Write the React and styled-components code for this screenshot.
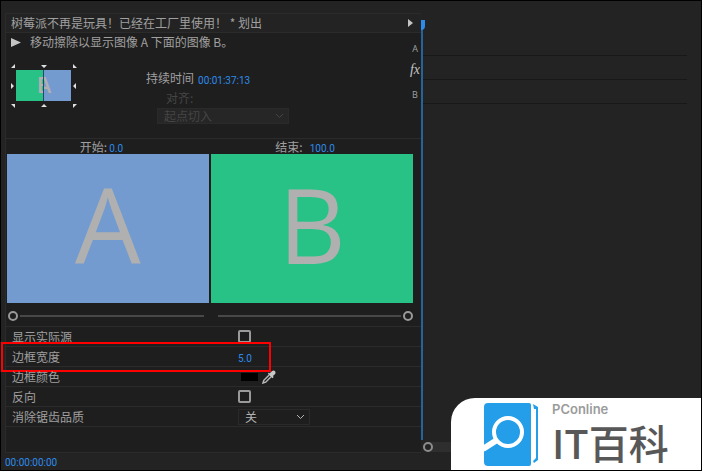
import React, { useState } from "react";
import styled, { createGlobalStyle, css } from "styled-components";

const colors = {
  app: "#232323",
  panel: "#1e1e1e",
  line: "#2b2b2b",
  text: "#a0a0a0",
  dim: "#454545",
  hot: "#2d8ceb",
  clipA: "#739bcf",
  clipB: "#29c286",
  letter: "#b0b0b0",
};

const GlobalStyle = createGlobalStyle`
  *, *::before {
    box-sizing: border-box;
  }
  body {
    margin: 0;
    background: #000;
    color: ${colors.text};
    font: 12px/18px "Noto Sans CJK SC", sans-serif;
  }
  button, input, select {
    margin: 0;
    padding: 0;
    border: 0;
    background: none;
    color: inherit;
    font: inherit;
  }
`;

const flexCenter = css`
  display: flex;
  align-items: center;
`;

const Root = styled.div`
  position: relative;
  display: flex;
  flex-direction: column;
  min-height: 100vh;
  border: 1px solid #000;
  background: ${colors.app};
  overflow: hidden;
`;

const Workspace = styled.main`
  flex: 1;
  display: grid;
  grid-template-columns: 60% 1fr;
`;

const Panel = styled.section`
  display: flex;
  flex-direction: column;
  margin: 12px 0 0 4px;
  border: 1px solid ${colors.line};
  border-right: 0;
  background: ${colors.panel};
`;

const PanelHeader = styled.header`
  ${flexCenter}
  justify-content: space-between;
  height: 19px;
  padding: 0 8px 0 5px;
  border-bottom: 1px solid ${colors.line};
  background: ${colors.app};
`;

const Title = styled.h1`
  margin: 0;
  font-size: 12px;
  font-weight: 400;
  white-space: pre;
`;

const IconButton = styled.button`
  ${flexCenter}
  color: #c4c4c4;

  svg {
    display: block;
  }
`;

const Info = styled.div`
  display: flex;
  justify-content: space-between;
  padding-bottom: 14px;
  border-bottom: 1px solid ${colors.line};
`;

const Description = styled.div`
  ${flexCenter}
  gap: 9px;
  padding-left: 5px;
  white-space: nowrap;
`;

const Settings = styled.div`
  display: flex;
  gap: 69px;
  padding: 13px 0 0 5px;
`;

const Timing = styled.div`
  display: flex;
  flex-direction: column;
  padding-top: 4px;
`;

const Field = styled.div`
  ${flexCenter}
  gap: 4px;
  height: 20px;
  padding-left: ${({ $indent }) => $indent || 0}px;
  color: ${({ $dim }) => ($dim ? colors.dim : colors.text)};
`;

const HotInput = styled.input`
  width: ${({ $width }) => $width}px;
  height: 16px;
  padding-top: 4px;
  color: ${colors.hot};
  font: 10px/12px Roboto, sans-serif;
`;

const SelectBox = styled.div`
  ${flexCenter}
  position: relative;
  width: ${({ $width }) => $width}px;
  height: 16px;
  margin-left: ${({ $indent }) => $indent || 0}px;
  border: 1px solid #2a2a2a;
  background: ${({ $dim }) => ($dim ? "#262626" : "transparent")};
  color: ${({ $dim }) => ($dim ? colors.dim : "#b4b4b4")};

  select {
    width: 100%;
    height: 14px;
    padding-left: 6px;
    appearance: none;
    line-height: 14px;
    opacity: 1;
  }
  svg {
    position: absolute;
    right: 4px;
    pointer-events: none;
  }
`;

const TrackLabels = styled.div`
  display: flex;
  flex-direction: column;
  width: 12px;
  padding-top: 4px;
  text-align: center;
  font: 9px/23px "Open Sans", sans-serif;

  i {
    font: italic 14px/20px "Liberation Serif", serif;
    height: 23px;
    color: #c4c4c4;
  }
`;

const Previews = styled.div`
  display: grid;
  grid-template-columns: 1fr 1fr;
  gap: 0 ${({ $gap }) => $gap}px;
  padding: 0 8px 0 ${({ $left }) => $left}px;
`;

const PreviewLabel = styled.div`
  display: flex;
  align-items: center;
  justify-content: center;
  gap: ${({ $gap }) => $gap}px;
  height: 15px;
  padding-right: 13px;
  line-height: 14px;
`;

const Preview = styled.div`
  height: 149px;
  background: ${({ $color }) => $color};
  color: ${colors.letter};
  font: 500 104px/140px "Open Sans", sans-serif;
  text-align: center;
`;

const Range = styled.input`
  width: 100%;
  height: 26px;
  margin-bottom: -3px;
  appearance: none;

  &::-webkit-slider-runnable-track {
    height: 2px;
    background: #484848;
  }
  &::-webkit-slider-thumb {
    appearance: none;
    width: 10px;
    height: 10px;
    margin-top: -4px;
    border: 2px solid #999;
    border-radius: 50%;
    background: ${colors.panel};
    box-shadow: 0 0 0 2px ${colors.panel};
  }
`;

const Properties = styled.div`
  border-top: 1px solid ${colors.line};
`;

const Property = styled.div`
  ${flexCenter}
  position: relative;
  height: 20px;
  padding-left: 6px;
  border-bottom: 1px solid ${colors.line};

  > label {
    flex: 0 0 226px;
  }
`;

const Highlight = styled.span`
  position: absolute;
  top: -5px;
  left: -5px;
  width: 270px;
  height: 30px;
  border: 2px solid #f00;
  pointer-events: none;
`;

const Checkbox = styled.input`
  width: 13px;
  height: 13px;
  appearance: none;
  border: 2px solid #9a9a9a;
  border-radius: 2px;

  &:checked {
    background: ${colors.hot};
  }
`;

const Swatch = styled.input`
  width: 17px;
  height: 8px;
  margin: 0 4px 0 3px;

  &::-webkit-color-swatch-wrapper {
    padding: 0;
  }
  &::-webkit-color-swatch {
    border: 0;
  }
`;

const Timeline = styled.section`
  position: relative;
  display: flex;
  flex-direction: column;
  justify-content: space-between;
`;

const Lanes = styled.div`
  padding-top: 31px;
  margin-right: 14px;
`;

const Lane = styled.div`
  height: 24px;
  border-bottom: 1px solid #181818;
`;

const Playhead = styled.div`
  position: absolute;
  top: 19px;
  bottom: 13px;
  left: 0;
  width: 2px;
  background: #24639b;

  &::before {
    content: "";
    position: absolute;
    width: 4px;
    height: 10px;
    border-bottom-right-radius: 4px;
    background: #2d8ceb;
  }
`;

const ScrollBar = styled.div`
  ${flexCenter}
  height: 10px;
  margin: 0 14px 1px 2px;
  border-radius: 5px;
  background: #2e2e2e;

  &::before {
    content: "";
    width: 10px;
    height: 10px;
    border: 2px solid #8c8c8c;
    border-radius: 50%;
    background: ${colors.app};
  }
`;

const StatusBar = styled.footer`
  height: 17px;
  padding-left: 4px;
  color: ${colors.hot};
  font: 10px/20px Roboto, sans-serif;
`;

const Watermark = styled.aside`
  position: absolute;
  right: 0;
  bottom: 0;
  display: flex;
  gap: 13px;
  width: 250px;
  height: 72px;
  padding: 5px 0 0 33px;
  border-top-left-radius: 24px;
  background: #fff;
`;

const Brand = styled.div`
  color: #9b9b9b;
  font: 600 13px/13px Inter, sans-serif;

  strong {
    display: block;
    color: #585858;
    font: 500 40px/52px "Noto Sans CJK SC", sans-serif;
  }
`;

const Triangle = ({ width, height }) => (
  <svg width={width} height={height} viewBox="0 0 10 10" preserveAspectRatio="none">
    <path d="M0 0L10 5L0 10Z" fill="currentColor" />
  </svg>
);

const Chevron = () => (
  <svg width="9" height="6" viewBox="0 0 9 6" fill="none" stroke="currentColor">
    <path d="M1 1L4.5 4.5L8 1" />
  </svg>
);

const Eyedropper = () => (
  <svg width="14" height="14" viewBox="0 0 14 14">
    <path d="M7.6 3.4L9.8 1.3C12-.8 14.8 2 12.9 4.2L10.9 6.1L11.7 7L10.4 8.2L5.9 3.7L7 2.5Z" fill="#c8c8c8" />
    <path d="M7.2 5L1.8 10.3L1 13L3.7 12.2L9 6.8" fill="none" stroke="#b8b8b8" strokeWidth="1.5" />
  </svg>
);

// direction picker, the arrows sit on the edges and corners of the thumbnail
const WipeThumb = () => (
  <svg width="66" height="44" viewBox="0 0 66 44" role="img" aria-label="划出">
    <clipPath id="wipe-b"><rect x="5" y="6" width="28" height="31" /></clipPath>
    <clipPath id="wipe-a"><rect x="33" y="6" width="27" height="31" /></clipPath>
    <rect x="5" y="6" width="28" height="31" fill={colors.clipB} />
    <rect x="33" y="6" width="27" height="31" fill={colors.clipA} />
    <g fill={colors.letter} fontFamily="Open Sans" fontSize="22" fontWeight="600" textAnchor="middle">
      <text x="33" y="29" clipPath="url(#wipe-b)">B</text>
      <text x="33" y="29" clipPath="url(#wipe-a)">A</text>
    </g>
    <path d="M32.5 6V37" stroke="#26476b" />
    <path
      fill="#e0e0e0"
      d="M4 0V4H0ZM30 1H36L33 4ZM62 0V4H66ZM0 19L3 22L0 25ZM65 19L62 22L65 25ZM0 40H4V44ZM30 43H36L33 40ZM62 40H66L62 44Z"
    />
  </svg>
);

const BookLogo = () => (
  <svg width="55" height="63" viewBox="0 0 55 63">
    <path d="M4 0H45Q47 0 47 2V61Q47 63 45 63H4Q0 63 0 59V4Q0 0 4 0Z" fill="#249ee9" />
    <path d="M49 1L54 4V57L50 60L49 58L52 55V6H50Z" fill="#249ee9" />
    <path d="M-1 46L13 37" stroke="#fff" strokeWidth="6" />
    <circle cx="24" cy="29" r="14" fill="none" stroke="#fff" strokeWidth="4" />
  </svg>
);

const App = () => {
  const [start, setStart] = useState("0.0");
  const [end, setEnd] = useState("100.0");

  return (
    <Root>
      <GlobalStyle />
      <Workspace>
        <Panel>
          <PanelHeader>
            <Title>树莓派不再是玩具！已经在工厂里使用！ * 划出</Title>
            <IconButton aria-label="展开">
              <Triangle width={5} height={8} />
            </IconButton>
          </PanelHeader>

          <Info>
            <div>
              <Description>
                <IconButton aria-label="播放">
                  <Triangle width={10} height={9} />
                </IconButton>
                <span>移动擦除以显示图像 A 下面的图像 B。</span>
              </Description>
              <Settings>
                <WipeThumb />
                <Timing>
                  <Field>
                    <label htmlFor="duration">持续时间</label>
                    <HotInput id="duration" $width={56} defaultValue="00:01:37:13" />
                  </Field>
                  <Field $dim $indent={20}>
                    <label htmlFor="align">对齐:</label>
                  </Field>
                  <SelectBox $dim $width={132} $indent={11}>
                    <select id="align" disabled>
                      <option>起点切入</option>
                    </select>
                    <Chevron />
                  </SelectBox>
                </Timing>
              </Settings>
            </div>
            <TrackLabels>
              <span>A</span>
              <i>fx</i>
              <span>B</span>
            </TrackLabels>
          </Info>

          <Previews $gap={2} $left={1}>
            <PreviewLabel $gap={2}>
              <label htmlFor="start">开始:</label>
              <HotInput id="start" $width={14} value={start} onChange={(e) => setStart(e.target.value)} />
            </PreviewLabel>
            <PreviewLabel $gap={7}>
              <label htmlFor="end">结束:</label>
              <HotInput id="end" $width={26} value={end} onChange={(e) => setEnd(e.target.value)} />
            </PreviewLabel>
            <Preview $color={colors.clipA}>A</Preview>
            <Preview $color={colors.clipB}>B</Preview>
          </Previews>
          <Previews $gap={14} $left={2}>
            <Range
              type="range"
              aria-label="开始"
              value={parseFloat(start) || 0}
              onChange={(e) => setStart(Number(e.target.value).toFixed(1))}
            />
            <Range
              type="range"
              aria-label="结束"
              value={parseFloat(end) || 0}
              onChange={(e) => setEnd(Number(e.target.value).toFixed(1))}
            />
          </Previews>

          <Properties>
            <Property>
              <label htmlFor="source">显示实际源</label>
              <Checkbox id="source" type="checkbox" />
            </Property>
            <Property>
              <label htmlFor="border-width">边框宽度</label>
              <HotInput id="border-width" $width={26} defaultValue="5.0" />
              <Highlight />
            </Property>
            <Property>
              <label htmlFor="border-color">边框颜色</label>
              <Swatch id="border-color" type="color" defaultValue="#000000" />
              <IconButton aria-label="吸管">
                <Eyedropper />
              </IconButton>
            </Property>
            <Property>
              <label htmlFor="reverse">反向</label>
              <Checkbox id="reverse" type="checkbox" />
            </Property>
            <Property>
              <label htmlFor="quality">消除锯齿品质</label>
              <SelectBox $width={72}>
                <select id="quality">
                  <option>关</option>
                </select>
                <Chevron />
              </SelectBox>
            </Property>
          </Properties>
        </Panel>

        <Timeline>
          <Lanes>
            <Lane />
            <Lane />
            <Lane />
          </Lanes>
          <ScrollBar />
          <Playhead />
        </Timeline>
      </Workspace>
      <StatusBar>00:00:00:00</StatusBar>

      <Watermark>
        <BookLogo />
        <Brand>
          PConline
          <strong>IT百科</strong>
        </Brand>
      </Watermark>
    </Root>
  );
};

export default App;
